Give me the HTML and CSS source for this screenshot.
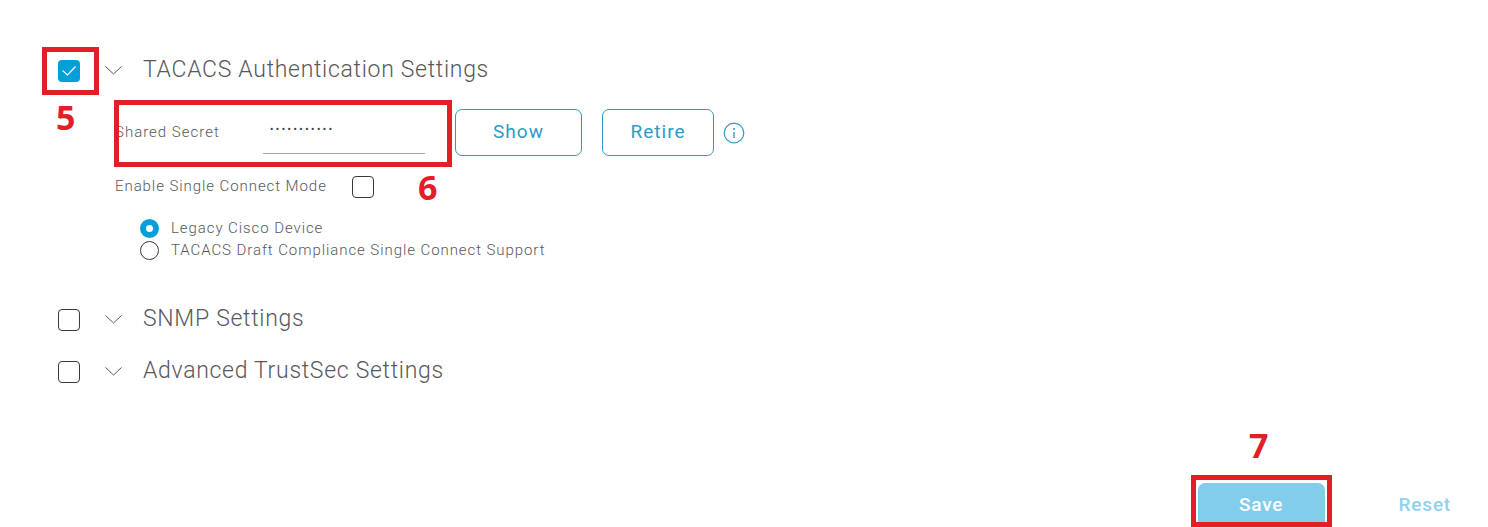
FILE: index.html
```html
<!DOCTYPE html>
<html lang="en">
<head>
    <meta charset="UTF-8">
    <meta name="viewport" content="width=device-width, initial-scale=1.0">
    <title>TACACS Authentication Settings</title>
    <link rel="stylesheet" href="styles.css">
</head>
<body>
    <!-- TACACS section -->
    <section class="section section-first">
        <div class="section-header">
            <span class="checkbox checked">
                <svg viewBox="0 0 22 22" width="22" height="22"><path d="M4.5 10.5 L9.5 15 L17.5 6.5" fill="none" stroke="#fff" stroke-width="1.1"/></svg>
            </span>
            <svg class="chevron" viewBox="0 0 17 9" width="17" height="9"><path d="M0.5 0.5 L8.5 8 L16.5 0.5" fill="none" stroke="#58585b" stroke-width="1"/></svg>
            <h2 class="section-title">TACACS Authentication Settings</h2>
        </div>
        <div class="section-body">
            <div class="secret-row">
                <label class="field-label" for="secret">Shared Secret</label>
                <input class="secret-input" id="secret" type="password" value="secretsecre">
                <button class="btn btn-outline btn-show">Show</button>
                <button class="btn btn-outline btn-retire">Retire</button>
                <svg class="info-icon" viewBox="0 0 22 22" width="22" height="22">
                    <circle cx="11" cy="11" r="9.8" fill="none" stroke="#2e9bc9" stroke-width="1.2"/>
                    <circle cx="11" cy="7" r="1" fill="#2e9bc9"/>
                    <path d="M11 10 V16" stroke="#2e9bc9" stroke-width="1.4"/>
                </svg>
            </div>
            <div class="connect-row">
                <span class="field-text">Enable Single Connect Mode</span>
                <span class="checkbox"></span>
            </div>
            <div class="radio-group">
                <div class="radio-row">
                    <span class="radio selected"></span>
                    <span class="field-text">Legacy Cisco Device</span>
                </div>
                <div class="radio-row">
                    <span class="radio"></span>
                    <span class="field-text">TACACS Draft Compliance Single Connect Support</span>
                </div>
            </div>
        </div>
    </section>

    <!-- Collapsed sections -->
    <section class="section section-snmp">
        <div class="section-header">
            <span class="checkbox"></span>
            <svg class="chevron" viewBox="0 0 17 9" width="17" height="9"><path d="M0.5 0.5 L8.5 8 L16.5 0.5" fill="none" stroke="#58585b" stroke-width="1"/></svg>
            <h2 class="section-title">SNMP Settings</h2>
        </div>
    </section>
    <section class="section section-trustsec">
        <div class="section-header">
            <span class="checkbox"></span>
            <svg class="chevron" viewBox="0 0 17 9" width="17" height="9"><path d="M0.5 0.5 L8.5 8 L16.5 0.5" fill="none" stroke="#58585b" stroke-width="1"/></svg>
            <h2 class="section-title">Advanced TrustSec Settings</h2>
        </div>
    </section>

    <div class="form-actions">
        <button class="btn btn-save">Save</button>
        <button class="btn btn-reset">Reset</button>
    </div>

    <!-- Red annotations drawn over the screenshot -->
    <div class="mark-box mark-box-5"></div>
    <div class="mark-box mark-box-6"></div>
    <div class="mark-box mark-box-7"></div>
    <span class="mark-num mark-num-5">5</span>
    <span class="mark-num mark-num-6">6</span>
    <span class="mark-num mark-num-7">7</span>
</body>
</html>
```

FILE: styles.css
```css
* {
    margin: 0;
    padding: 0;
    box-sizing: border-box;
    font-family: 'Roboto', 'Liberation Sans', sans-serif;
}

html, body {
    height: 527px;
    overflow: hidden;
}

body {
    position: relative;
    background-color: #fff;
    color: #58585b;
}

.section {
    padding-left: 58px;
}

.section-first {
    padding-top: 60px;
}

.section-snmp {
    margin-top: 48px;
}

.section-trustsec {
    margin-top: 30px;
}

.section-header {
    display: flex;
    align-items: center;
    height: 22px;
}

.checkbox {
    display: block;
    flex: none;
    width: 22px;
    height: 22px;
    border: 1px solid #39393b;
    border-radius: 4px;
    background: #fff;
}

.checkbox.checked {
    border: none;
    background: #049fd9;
}

.chevron {
    flex: none;
    margin-left: 25px;
    margin-bottom: 2px;
}

.section-title {
    margin-left: 21px;
    margin-bottom: 3px;
    font-size: 23px;
    font-weight: 300;
    letter-spacing: 0.7px;
    color: #58585b;
}

.section-body {
    padding-left: 58px;
}

.secret-row {
    display: flex;
    align-items: center;
    height: 47px;
    margin-top: 27px;
}

.field-label {
    width: 147px;
    margin-left: -1px;
    margin-right: 1px;
    margin-bottom: 2px;
    font-size: 15px;
    font-weight: 300;
    letter-spacing: 1px;
}

.secret-input {
    width: 162px;
    height: 43px;
    padding: 0 7px 5px;
    border: none;
    border-bottom: 1px solid #a8a8ab;
    outline: none;
    font-size: 10px;
    letter-spacing: 2.5px;
    color: #39393b;
}

.btn {
    font-size: 19px;
    letter-spacing: 1px;
    line-height: 22px;
    cursor: pointer;
}

.btn-outline {
    height: 47px;
    padding-bottom: 2px;
    border: 1px solid #2e9bc0;
    border-radius: 7px;
    background: #fff;
    color: #2e9bc9;
}

.btn-show {
    width: 127px;
    margin-left: 30px;
}

.btn-retire {
    width: 112px;
    margin-left: 20px;
}

.info-icon {
    flex: none;
    margin-left: 9px;
}

.connect-row {
    display: flex;
    align-items: center;
    height: 22px;
    margin-top: 20px;
}

.connect-row .field-text {
    width: 237px;
    margin-left: -1px;
    margin-bottom: 2px;
}

.field-text {
    font-size: 15px;
    font-weight: 300;
    letter-spacing: 0.93px;
}

.radio-group {
    margin-top: 19px;
    padding-left: 24px;
}

.radio-row {
    display: flex;
    align-items: center;
    gap: 12px;
    height: 22px;
}

.radio {
    display: block;
    flex: none;
    width: 19px;
    height: 19px;
    border: 1px solid #39393b;
    border-radius: 50%;
}

.radio.selected {
    border: 6px solid #049fd9;
    background: #fff;
}

.form-actions {
    display: flex;
    justify-content: flex-end;
    align-items: center;
    margin-top: 100px;
    padding-right: 37px;
}

.btn-save {
    width: 127px;
    height: 43px;
    border: none;
    border-radius: 7px 7px 0 0;
    background: #82cdeb;
    color: #fff;
    font-weight: 500;
    letter-spacing: 0.8px;
}

.btn-reset {
    margin-left: 74px;
    border: none;
    background: none;
    color: #8fd2ec;
    font-weight: 500;
    letter-spacing: 0.8px;
}

/* Annotations */
.mark-box {
    position: absolute;
    border: 5px solid #e31e26;
}

.mark-box-5 {
    left: 42px;
    top: 47px;
    width: 57px;
    height: 48px;
}

.mark-box-6 {
    left: 114px;
    top: 100px;
    width: 338px;
    height: 67px;
}

.mark-box-7 {
    left: 1191px;
    top: 475px;
    width: 141px;
    height: 52px;
}

.mark-num {
    position: absolute;
    font-family: 'Open Sans', sans-serif;
    font-size: 34px;
    font-weight: 700;
    line-height: 40px;
    color: #e31e26;
}

.mark-num-5 {
    left: 56px;
    top: 97px;
}

.mark-num-6 {
    left: 418px;
    top: 167px;
}

.mark-num-7 {
    left: 1249px;
    top: 425px;
}
```
